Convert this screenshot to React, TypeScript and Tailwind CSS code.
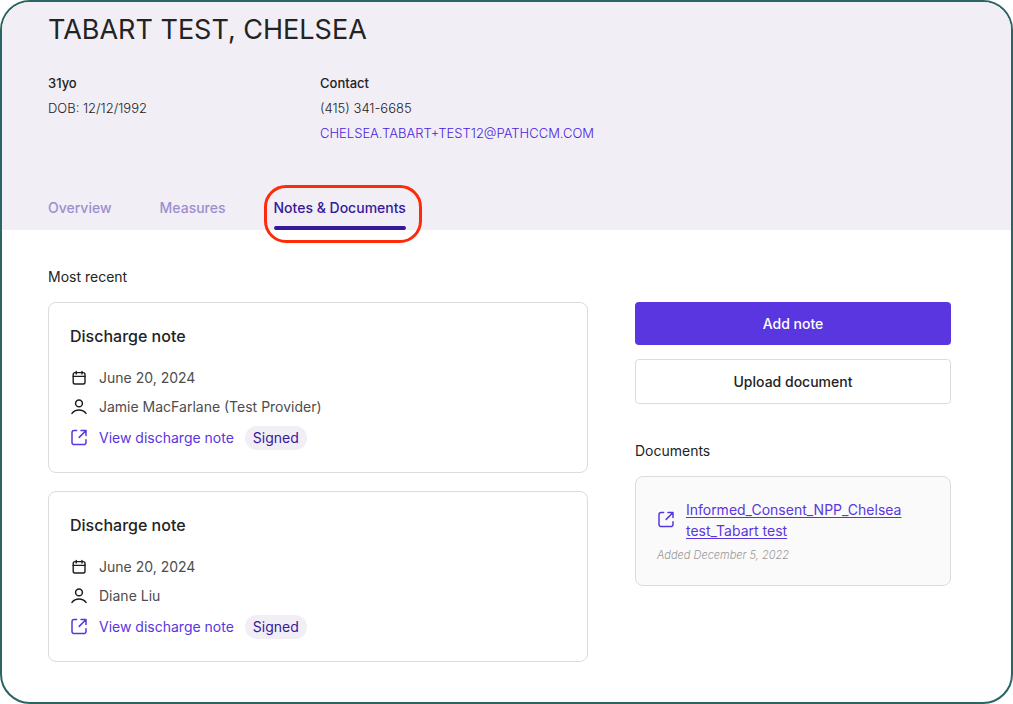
import type { ReactNode } from "react";

interface Note {
  id: number;
  title: string;
  date: string;
  provider: string;
  status: string;
}

const notes: Note[] = [
  { id: 1, title: "Discharge note", date: "June 20, 2024", provider: "Jamie MacFarlane (Test Provider)", status: "Signed" },
  { id: 2, title: "Discharge note", date: "June 20, 2024", provider: "Diane Liu", status: "Signed" },
];

const tabs = ["Overview", "Measures", "Notes & Documents"];

function CalendarIcon() {
  return (
    <svg width="18" height="18" viewBox="0 0 18 18" fill="none" stroke="#1c1c1c" strokeWidth="1.4" strokeLinecap="round" strokeLinejoin="round" aria-hidden="true">
      <rect x="3.2" y="3.6" width="11.8" height="11.4" rx="1.8" />
      <path d="M3.2 7.4H15M6.2 2.4V5M12 2.4V5" />
    </svg>
  );
}

function UserIcon() {
  return (
    <svg width="18" height="18" viewBox="0 0 18 18" fill="none" stroke="#1c1c1c" strokeWidth="1.5" strokeLinecap="round" aria-hidden="true">
      <circle cx="9" cy="5.4" r="3.4" />
      <path d="M2 15.4C3.6 13.2 6.1 12 9 12S14.4 13.200 16 15.400" />
    </svg>
  );
}

function OpenIcon() {
  return (
    <svg width="18" height="18" viewBox="0 0 18 18" fill="none" stroke="currentColor" strokeWidth="1.5" strokeLinecap="round" strokeLinejoin="round" aria-hidden="true">
      <path d="M6.6 1.6H4.2A2.200 2.200 0 0 0 2 3.800V13.400A2.200 2.200 0 0 0 4.200 15.600H13.800A2.200 2.200 0 0 0 16 13.400V10.800" />
      <path d="M11 1.600H16V6.600M15.800 1.800L9.200 8.400" />
    </svg>
  );
}

function Row({ icon, children }: { icon: ReactNode; children: ReactNode }) {
  return (
    <div className="flex items-center gap-[11px]">
      <span className="shrink-0">{icon}</span>
      {children}
    </div>
  );
}

function NoteCard({ note }: { note: Note }) {
  return (
    <article className="rounded-lg border border-[#dcdcdc] px-[21px] pt-[21px] pb-[22px]">
      <h3 className="text-base leading-6 font-medium text-[#232323]">{note.title}</h3>
      <div className="mt-[18px] space-y-[5px] text-sm leading-6 text-[#4d4d4d]">
        <Row icon={<CalendarIcon />}>
          <span>{note.date}</span>
        </Row>
        <Row icon={<UserIcon />}>
          <span>{note.provider}</span>
        </Row>
        <div className="pt-0.5 text-[#5936e0]">
          <Row icon={<OpenIcon />}>
            <a href="#">View discharge note</a>
            <span className="rounded-full bg-[#f1eef6] px-2 text-[#35199a]">{note.status}</span>
          </Row>
        </div>
      </div>
    </article>
  );
}

export default function App() {
  return (
    <div className="flex min-h-screen flex-col overflow-hidden rounded-[30px] border-2 border-[#2a6463] bg-white font-['Inter',sans-serif] text-[#232323]">
      <header className="bg-[#f1eef6] px-[46px] pt-2">
        <h1 className="text-[27px] leading-10">TABART TEST, CHELSEA</h1>

        <div className="mt-[21px] grid grid-cols-[272px_1fr] text-[13px] leading-[25px]">
          <div>
            <p className="font-medium">31yo</p>
            <p className="font-light">DOB: 12/12/1992</p>
          </div>
          <div>
            <p className="font-medium">Contact</p>
            <p className="font-light">(415) 341-6685</p>
            <a href="mailto:CHELSEA.TABART+TEST12@PATHCCM.COM" className="font-light text-[#4a22e0]">
              CHELSEA.TABART+TEST12@PATHCCM.COM
            </a>
          </div>
        </div>

        <nav className="mt-[52px] flex gap-12 text-sm leading-5 font-medium">
          {tabs.map((tab) =>
            tab === "Notes & Documents" ? (
              <a key={tab} href="#" aria-current="page" className="relative text-[#35199a]">
                {tab}
                <span className="mt-2 block h-1 rounded-full bg-[#35199a]" />
                {/* Highlight ring around the active tab */}
                <span className="pointer-events-none absolute -top-[13px] -right-4 -bottom-[13px] -left-[10px] rounded-[22px] border-3 border-[#fd2b0b]" />
              </a>
            ) : (
              <a key={tab} href="#" className="text-[#9d8fcd]">
                {tab}
              </a>
            )
          )}
        </nav>
      </header>

      <main className="grid grid-cols-[41fr_24fr] gap-x-[47px] pt-[37px] pr-[60px] pb-10 pl-[46px]">
        <section>
          <h2 className="text-sm leading-5">Most recent</h2>
          <div className="mt-[15px] space-y-[18px]">
            {notes.map((note) => (
              <NoteCard key={note.id} note={note} />
            ))}
          </div>
        </section>

        <aside className="pt-[35px]">
          <button type="button" className="block h-[43px] w-full rounded-sm bg-[#5936e0] text-sm font-medium text-white">
            Add note
          </button>
          <button type="button" className="mt-[14px] block h-[45px] w-full rounded-sm border border-[#dcdcdc] bg-white text-sm font-medium">
            Upload document
          </button>

          <h2 className="mt-[37px] text-sm leading-5">Documents</h2>
          <div className="mt-[15px] rounded-lg border border-[#dcdcdc] bg-[#fafafa] px-[21px] pt-[22px] pb-5">
            <div className="flex items-center gap-[11px] text-[#5936e0]">
              <span className="shrink-0">
                <OpenIcon />
              </span>
              <a href="#" className="text-sm leading-[21px] underline underline-offset-2">
                Informed_Consent_NPP_Chelsea test_Tabart test
              </a>
            </div>
            <p className="mt-1 text-[11px] leading-5 font-light text-[#999999] italic">Added December 5, 2022</p>
          </div>
        </aside>
      </main>
    </div>
  );
}
